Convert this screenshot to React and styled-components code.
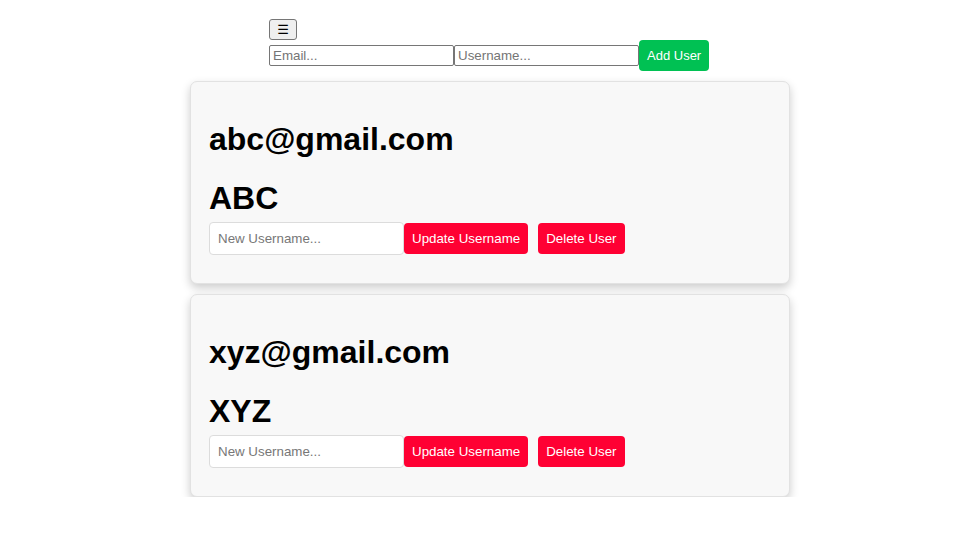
import React from "react";
import styled, { createGlobalStyle } from "styled-components";

const Global = createGlobalStyle`
  body { margin: 8px; background: #fff; font-family: "Liberation Sans", Arial, sans-serif; }
`;

const Page = styled.div`
  width: 600px;
  margin-left: 182px;
  display: flex;
  flex-direction: column;
  align-items: center;
  gap: 10px;
  padding-top: 11px;
`;

const Header = styled.div`
  width: 442px;
  display: flex;
  flex-direction: column;
  align-items: flex-start;
`;

const MenuButton = styled.button`
  width: 28px;
  height: 21px;
  padding: 0;
  font-family: "DejaVu Sans", sans-serif;
  font-size: 13px;
  line-height: 1;
  background: #efefef;
  color: #000;
  border: 1px solid #767676;
  border-radius: 3px;
`;

const AddRow = styled.div`
  display: flex;
  align-items: center;
`;

const PlainInput = styled.input`
  box-sizing: border-box;
  width: 185px;
  height: 21px;
  padding: 1px 3px;
  border: 1px solid #767676;
  border-radius: 2px;
  font-family: "Liberation Sans", Arial, sans-serif;
  font-size: 13.33px;
  &::placeholder { color: #757575; }
`;

const ActionButton = styled.button`
  box-sizing: border-box;
  height: 31px;
  padding: 0 8px;
  border: none;
  border-radius: 4px;
  background: ${(p) => (p.$tone === "green" ? "#00c153" : "#ff0033")};
  color: #fff;
  font-family: "Liberation Sans", Arial, sans-serif;
  font-size: ${(p) => (p.$tone === "green" ? "13px" : "13.33px")};
  margin-left: ${(p) => p.$gap || 0}px;
  cursor: pointer;
`;

const Card = styled.div`
  box-sizing: border-box;
  width: 600px;
  padding: 18px 18px 28px;
  background: #f8f8f8;
  border: 1px solid #e2e2e2;
  border-radius: 7px;
  box-shadow: 0 4px 10px rgba(0, 0, 0, 0.2);
`;

const Title = styled.h1`
  font-size: 32px;
  line-height: 37px;
  font-weight: bold;
  color: #000;
  margin: ${(p) => (p.$second ? "0 0 5px" : "21px 0 22px")};
`;

const EditRow = styled.div`
  display: flex;
  align-items: center;
`;

const EditInput = styled.input`
  box-sizing: border-box;
  width: 195px;
  height: 33px;
  padding: 0 8px;
  background: #fff;
  border: 1px solid #dcdcdc;
  border-radius: 4px;
  font-family: "Liberation Sans", Arial, sans-serif;
  font-size: 13.33px;
  &::placeholder { color: #777; }
`;

const users = [
  { email: "abc@gmail.com", name: "ABC" },
  { email: "xyz@gmail.com", name: "XYZ" },
];

export default function App() {
  return (
    <>
      <Global />
      <Page>
        <Header>
          <MenuButton>☰</MenuButton>
          <AddRow>
            <PlainInput placeholder="Email..." />
            <PlainInput placeholder="Username..." />
            <ActionButton $tone="green">Add User</ActionButton>
          </AddRow>
        </Header>
        {users.map((u) => (
          <Card key={u.email}>
            <Title>{u.email}</Title>
            <Title $second>{u.name}</Title>
            <EditRow>
              <EditInput placeholder="New Username..." />
              <ActionButton>Update Username</ActionButton>
              <ActionButton $gap={10}>Delete User</ActionButton>
            </EditRow>
          </Card>
        ))}
      </Page>
    </>
  );
}
